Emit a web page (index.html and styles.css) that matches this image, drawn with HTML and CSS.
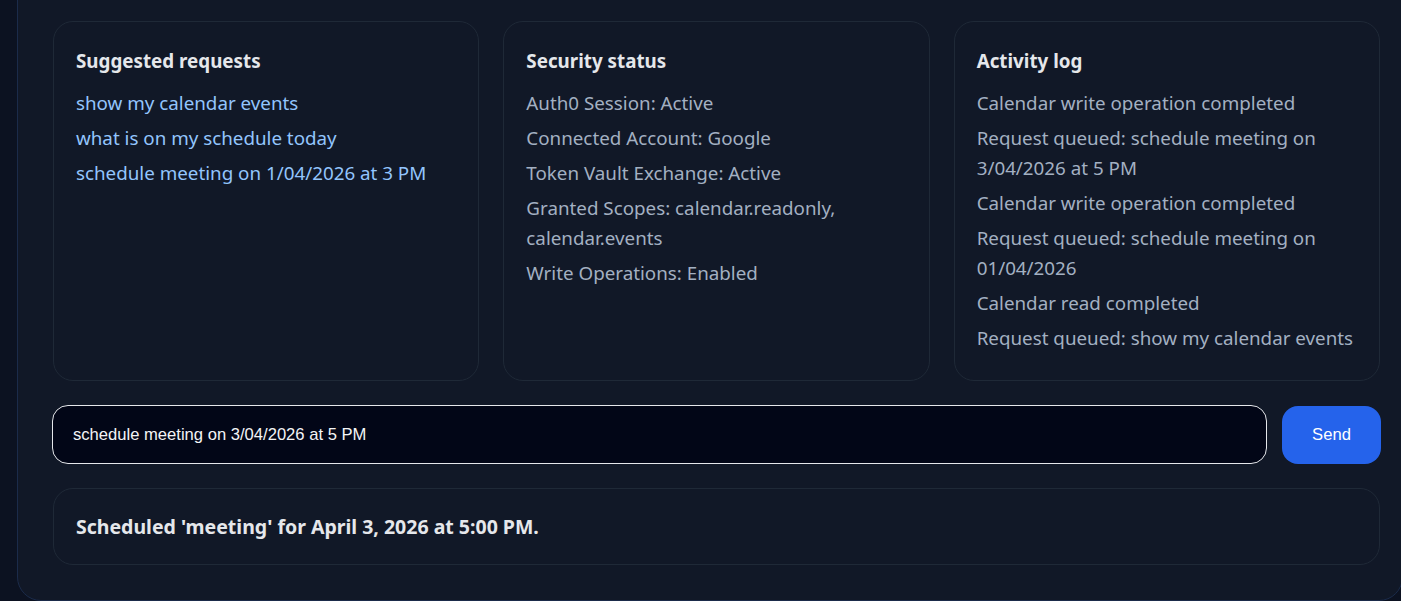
FILE: index.html
```html
<!DOCTYPE html>
<html lang="en">
<head>
<meta charset="utf-8">
<title>Calendar Agent</title>
<link rel="stylesheet" href="styles.css">
</head>
<body>
<main class="panel">
  <section class="cards">
    <div class="card">
      <h3 class="card-title">Suggested requests</h3>
      <ul class="list list-links">
        <li>show my calendar events</li>
        <li>what is on my schedule today</li>
        <li>schedule meeting on 1/04/2026 at 3 PM</li>
      </ul>
    </div>
    <div class="card">
      <h3 class="card-title">Security status</h3>
      <ul class="list">
        <li>Auth0 Session: Active</li>
        <li>Connected Account: Google</li>
        <li>Token Vault Exchange: Active</li>
        <li>Granted Scopes: calendar.readonly, calendar.events</li>
        <li>Write Operations: Enabled</li>
      </ul>
    </div>
    <div class="card">
      <h3 class="card-title">Activity log</h3>
      <ul class="list">
        <li>Calendar write operation completed</li>
        <li>Request queued: schedule meeting on 3/04/2026 at 5 PM</li>
        <li>Calendar write operation completed</li>
        <li>Request queued: schedule meeting on 01/04/2026</li>
        <li>Calendar read completed</li>
        <li>Request queued: show my calendar events</li>
      </ul>
    </div>
  </section>
  <form class="composer">
    <input class="composer-input" type="text" value="schedule meeting on 3/04/2026 at 5 PM">
    <button class="composer-send" type="button">Send</button>
  </form>
  <section class="result">
    <p class="result-text">Scheduled 'meeting' for April 3, 2026 at 5:00 PM.</p>
  </section>
</main>
</body>
</html>
```
FILE: styles.css
```css
html, body {
  margin: 0;
  padding: 0;
  background: #0c1221;
  overflow: hidden;
  height: 601px;
}

body {
  font-family: "Noto Sans", "Open Sans", sans-serif;
  color: #e5e7eb;
}

.panel {
  box-sizing: border-box;
  width: 1386px;
  margin: -30px 0 0 17px;
  padding: 50px 22px 35px 35px;
  background: #111827;
  border: 1px solid #1b2b4a;
  border-radius: 24px;
  display: flex;
  flex-direction: column;
  gap: 24px;
}

.cards {
  display: grid;
  grid-template-columns: 1fr 1fr 1fr;
  gap: 24px;
}

.card {
  border: 1px solid #1f2937;
  border-radius: 20px;
  padding: 24px 22px 27px;
  background: #111827;
}

.card-title {
  margin: 0 0 12px;
  font-size: 18.8px;
  line-height: 30px;
  font-weight: 700;
  color: #e5e7eb;
}

.list {
  list-style: none;
  margin: 0;
  padding: 0;
  display: flex;
  flex-direction: column;
  gap: 5px;
  font-size: 18.8px;
  line-height: 30px;
  color: #a3b0c2;
}

.list-links {
  color: #93c5fd;
}

.composer {
  display: flex;
  gap: 15px;
  margin: 0 -1px 0 -1px;
}

.composer-input {
  flex: 1;
  height: 59px;
  box-sizing: border-box;
  border: 1px solid #e5e7eb;
  border-radius: 16px;
  background: #020617;
  color: #f3f4f6;
  font-family: "Liberation Sans", Arial, sans-serif;
  font-size: 16.6px;
  padding: 0 20px;
  outline: none;
}

.composer-send {
  width: 99px;
  height: 58px;
  margin-top: 1px;
  border: none;
  border-radius: 16px;
  background: #2563eb;
  color: #ffffff;
  font-family: "Liberation Sans", Arial, sans-serif;
  font-size: 16.6px;
}

.result {
  border: 1px solid #1f2937;
  border-radius: 20px;
  padding: 23px 22px 22px;
}

.result-text {
  margin: 0;
  font-size: 19.5px;
  line-height: 30px;
  font-weight: 700;
  color: #e5e7eb;
}
```
